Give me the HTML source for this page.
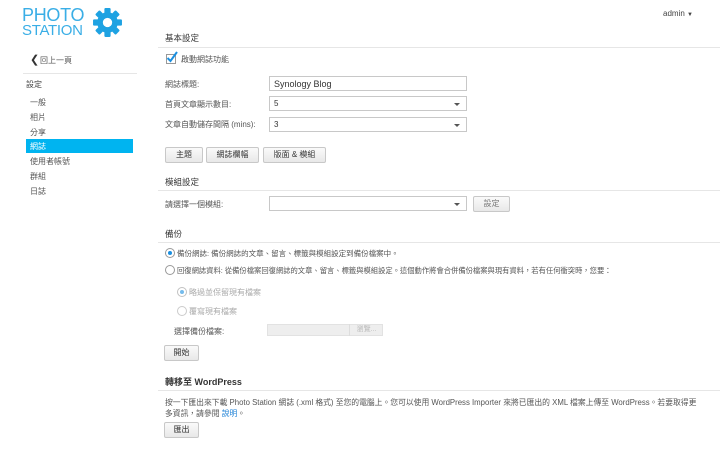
<!DOCTYPE html>
<html><head><meta charset="utf-8"><style>
*{margin:0;padding:0;box-sizing:border-box}
body{width:728px;height:463px;background:#fff;font-family:"Liberation Sans","Noto Sans CJK TC",sans-serif;font-size:8px;color:#333;position:relative;overflow:hidden}
.a{position:absolute;white-space:nowrap}
.h{font-size:8.5px;color:#333}
.line{position:absolute;height:1px;background:#e6e6e6}
.inp{position:absolute;border:1px solid #c8c8c8;background:#fff;height:15px;font-size:8px;padding:2px 4px;line-height:10px}
.sel::after{content:"";position:absolute;right:6px;top:6px;border-left:3px solid transparent;border-right:3px solid transparent;border-top:3px solid #555}
.btn{position:absolute;border:1px solid #c8c8c8;border-radius:2px;background:linear-gradient(#fafafa,#e8e8e8);height:16px;text-align:center;line-height:14px;font-size:8px;color:#333}
.rad{position:absolute;width:10px;height:10px;border:1px solid #999;border-radius:50%;background:#fff}
.rad.on::after{content:"";position:absolute;left:2px;top:2px;width:4px;height:4px;border-radius:50%;background:#1a8fe0}
.nav{position:absolute;left:30px;color:#555;font-size:8px}
</style></head><body>
<div class="a" style="left:22px;top:6px;font-size:18px;line-height:18px;color:#3aaee6;letter-spacing:-0.3px">PHOTO</div>
<div class="a" style="left:22px;top:23px;font-size:15px;line-height:16px;color:#3aaee6;letter-spacing:-0.3px">STATION</div>
<svg class="a" style="left:92px;top:7px" width="31" height="31" viewBox="0 0 30 30">
<defs><rect id="t" x="-3" y="-14" width="6" height="6" rx="1"/></defs>
<g fill="#1ea2e2" transform="translate(15 15)">
<circle r="10"/>
<use href="#t"/><use href="#t" transform="rotate(45)"/><use href="#t" transform="rotate(90)"/><use href="#t" transform="rotate(135)"/><use href="#t" transform="rotate(180)"/><use href="#t" transform="rotate(225)"/><use href="#t" transform="rotate(270)"/><use href="#t" transform="rotate(315)"/>
</g><circle cx="15" cy="15" r="4.5" fill="#fff"/></svg>
<div class="a" style="left:30px;top:53px;font-size:11px;color:#333">&#10094;</div>
<div class="a" style="left:40px;top:55px;color:#555">回上一頁</div>
<div class="line" style="left:23px;top:73px;width:114px"></div>
<div class="a" style="left:26px;top:79px;color:#444">設定</div>
<div class="nav" style="top:97px">一般</div>
<div class="nav" style="top:112px">相片</div>
<div class="nav" style="top:127px">分享</div>
<div class="a" style="left:26px;top:139px;width:107px;height:14px;background:#00b4f0"></div>
<div class="nav" style="top:141px;color:#fff">網誌</div>
<div class="nav" style="top:156px">使用者帳號</div>
<div class="nav" style="top:171px">群組</div>
<div class="nav" style="top:186px">日誌</div>

<div class="a" style="left:663px;top:9px;color:#444">admin <span style="font-size:6px">▼</span></div>

<div class="a h" style="left:165px;top:32px">基本設定</div>
<div class="line" style="left:158px;top:47px;width:562px"></div>
<div class="a" style="left:166px;top:54px;width:10px;height:10px;border:1px solid #999;background:#fff"></div>
<svg class="a" style="left:165px;top:50px" width="14" height="14" viewBox="0 0 14 14"><path d="M2.5 8 L5.5 11 L12 2" fill="none" stroke="#1a8fe0" stroke-width="2"/></svg>
<div class="a" style="left:181px;top:54px;color:#555">啟動網誌功能</div>
<div class="a" style="left:165px;top:79px;color:#555">網誌標題:</div>
<div class="inp" style="left:269px;top:76px;width:198px;font-size:9px">Synology Blog</div>
<div class="a" style="left:165px;top:99px;color:#555">首頁文章顯示數目:</div>
<div class="inp sel" style="left:269px;top:96px;width:198px">5</div>
<div class="a" style="left:165px;top:119px;color:#555">文章自動儲存間隔 (mins):</div>
<div class="inp sel" style="left:269px;top:117px;width:198px">3</div>
<div class="btn" style="left:165px;top:147px;width:38px">主題</div>
<div class="btn" style="left:206px;top:147px;width:53px">網誌欄幅</div>
<div class="btn" style="left:263px;top:147px;width:63px">版面 &amp; 模組</div>

<div class="a h" style="left:165px;top:176px">模組設定</div>
<div class="line" style="left:158px;top:190px;width:562px"></div>
<div class="a" style="left:165px;top:199px;color:#555">請選擇一個模組:</div>
<div class="inp sel" style="left:269px;top:196px;width:198px"></div>
<div class="btn" style="left:473px;top:196px;width:37px;color:#777">設定</div>

<div class="a h" style="left:165px;top:228px">備份</div>
<div class="line" style="left:158px;top:242px;width:562px"></div>
<div class="rad on" style="left:165px;top:248px"></div>
<div class="a" style="left:177px;top:248px;color:#555;font-size:7.5px">備份網誌: 備份網誌的文章、留言、標籤與模組設定到備份檔案中。</div>
<div class="rad" style="left:165px;top:265px"></div>
<div class="a" style="left:177px;top:266px;color:#555;font-size:7.3px">回復網誌資料: 從備份檔案回復網誌的文章、留言、標籤與模組設定。這個動作將會合併備份檔案與現有資料，若有任何衝突時，您要：</div>
<div class="rad on" style="left:177px;top:287px;opacity:.6"></div>
<div class="a" style="left:189px;top:287px;color:#aaa">略過並保留現有檔案</div>
<div class="rad" style="left:177px;top:306px;opacity:.5"></div>
<div class="a" style="left:189px;top:306px;color:#aaa">覆寫現有檔案</div>
<div class="a" style="left:174px;top:326px;color:#555">選擇備份檔案:</div>
<div class="a" style="left:267px;top:324px;width:116px;height:12px;background:#eee;border:1px solid #e2e2e2"></div>
<div class="a" style="left:349px;top:324px;width:34px;height:12px;border-left:1px solid #ddd;color:#bbb;font-size:7px;text-align:center;line-height:11px">瀏覽...</div>
<div class="btn" style="left:164px;top:345px;width:35px">開始</div>

<div class="a" style="left:165px;top:375px;font-size:9px;font-weight:bold;color:#333">轉移至 WordPress</div>
<div class="line" style="left:158px;top:390px;width:562px"></div>
<div class="a" style="left:165px;top:397px;color:#555;font-size:7.8px">按一下匯出來下載 Photo Station 網誌 (.xml 格式) 至您的電腦上。您可以使用 WordPress Importer 來將已匯出的 XML 檔案上傳至 WordPress。若要取得更</div>
<div class="a" style="left:165px;top:408px;color:#555;font-size:7.8px">多資訊，請參閱 <span style="color:#1a7fd6">說明</span>。</div>
<div class="btn" style="left:164px;top:422px;width:35px">匯出</div>
</body></html>
